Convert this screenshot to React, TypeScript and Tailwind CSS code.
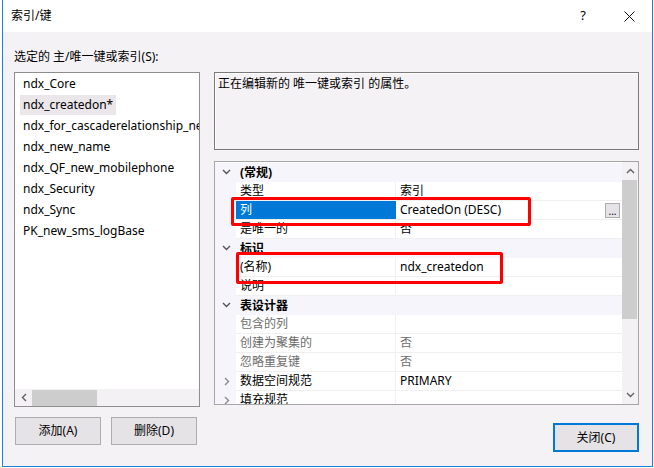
import React from "react";

const indexes = [
  "ndx_Core",
  "ndx_createdon*",
  "ndx_for_cascaderelationship_new_name",
  "ndx_new_name",
  "ndx_QF_new_mobilephone",
  "ndx_Security",
  "ndx_Sync",
  "PK_new_sms_logBase",
];

type Row = {
  name: string;
  value?: string;
  category?: boolean;
  expand?: "open" | "closed";
  disabled?: boolean;
  selected?: boolean;
};

const rows: Row[] = [
  { name: "(常规)", category: true, expand: "open" },
  { name: "类型", value: "索引" },
  { name: "列", value: "CreatedOn (DESC)", selected: true },
  { name: "是唯一的", value: "否" },
  { name: "标识", category: true, expand: "open" },
  { name: "(名称)", value: "ndx_createdon" },
  { name: "说明", value: "" },
  { name: "表设计器", category: true, expand: "open" },
  { name: "包含的列", value: "", disabled: true },
  { name: "创建为聚集的", value: "否", disabled: true },
  { name: "忽略重复键", value: "否", disabled: true },
  { name: "数据空间规范", value: "PRIMARY", expand: "closed" },
  { name: "填充规范", value: "", expand: "closed" },
];

function Chevron({ dir, color = "#555" }: { dir: "down" | "right" | "up" | "left"; color?: string }) {
  const d = {
    down: "M1 2 L4.5 5.5 L8 2",
    up: "M1 6 L4.5 2.5 L8 6",
    right: "M3 1 L6.5 4.5 L3 8",
    left: "M6 1 L2.5 4.5 L6 8",
  }[dir];
  return (
    <svg width="9" height="9" viewBox="0 0 9 9">
      <path d={d} fill="none" stroke={color} strokeWidth="1.4" />
    </svg>
  );
}

function PropRow({ row }: { row: Row }) {
  return (
    <div className="flex h-[19px] shrink-0">
      <div className="w-[21px] shrink-0 bg-[#f5f5fb] flex items-center justify-center pl-[2px]">
        {row.expand === "open" && <Chevron dir="down" />}
        {row.expand === "closed" && <Chevron dir="right" color="#8a8a8a" />}
      </div>
      {row.category ? (
        <div className="flex-1 bg-[#f5f5fb] pl-[4px] font-bold leading-[19px]">{row.name}</div>
      ) : (
        <>
          <div
            className={
              row.selected
                ? "w-[160px] shrink-0 bg-[#0078d7] text-white pl-[4px] leading-[18px] border-b border-[#f0f0f0]"
                : row.disabled
                ? "w-[160px] shrink-0 bg-white text-[#6d6d6d] pl-[4px] leading-[18px] border-b border-r border-[#f0f0f0]"
                : "w-[160px] shrink-0 bg-white pl-[4px] leading-[18px] border-b border-r border-[#f0f0f0]"
            }
          >
            {row.name}
          </div>
          <div
            className={
              row.disabled
                ? "flex-1 bg-white text-[#6d6d6d] pl-[4px] leading-[18px] border-b border-[#f0f0f0]"
                : "flex-1 bg-white pl-[4px] leading-[18px] border-b border-[#f0f0f0] flex items-center justify-between"
            }
          >
            <span>{row.value}</span>
            {row.selected && (
              <span className="mr-[2px] w-[15px] h-[15px] border border-[#adadad] bg-[#e5e3e7] flex items-end justify-center text-[10px] leading-[12px]">
                ...
              </span>
            )}
          </div>
        </>
      )}
    </div>
  );
}

export default function App() {
  return (
    <div className="relative w-[654px] h-[468px] bg-white pl-[2px] text-[12px] text-black font-['Noto_Sans','Noto_Sans_CJK_SC',sans-serif]">
      <div className="w-[651px] h-[467px] border-x border-b border-[#1883d7] bg-[#f5f2f6] flex flex-col">
        {/* title bar */}
        <div className="h-[32px] shrink-0 bg-white flex items-center pl-[8px]">
          <span className="flex-1 text-[12px]">索引/键</span>
          <span className="w-[46px] text-center text-[13px]">?</span>
          <span className="w-[46px] flex items-center justify-center">
            <svg width="11" height="11" viewBox="0 0 11 11">
              <path d="M0.5 0.5 L10.5 10.5 M10.5 0.5 L0.5 10.5" stroke="#111" strokeWidth="1" />
            </svg>
          </span>
        </div>

        <div className="pl-[11px] mt-[17px] leading-[16px]">选定的 主/唯一键或索引(S):</div>

        <div className="flex mt-[7px] pl-[11px] h-[335px]">
          {/* index list */}
          <div className="w-[186px] h-[335px] border border-[#8e8e8e] bg-white flex flex-col overflow-hidden">
            <div className="flex-1 pt-0 overflow-hidden">
              {indexes.map((n, i) => (
                <div key={n} className="h-[21px] pl-[5px] flex items-center whitespace-nowrap">
                  <span className={i === 1 ? "bg-[#eae6ea] px-[3px] leading-[20px]" : "px-[3px] leading-[20px]"}>{n}</span>
                </div>
              ))}
            </div>
            <div className="h-[17px] shrink-0 bg-[#f3f1f4] flex items-center">
              <span className="w-[17px] flex justify-center pl-[2px]">
                <Chevron dir="left" color="#606060" />
              </span>
              <div className="w-[65px] h-[16px] bg-[#cdcdcd]" />
              <div className="flex-1" />
            </div>
          </div>

          {/* right side */}
          <div className="ml-[14px] w-[425px] flex flex-col">
            <div className="h-[78px] border border-[#7a7a7a] bg-[#f5f2f6] shadow-[inset_1px_1px_0_#ffffff] pl-[3px] pt-[3px] leading-[16px]">
              正在编辑新的 唯一键或索引 的属性。
            </div>
            <div className="mt-[11px] h-[244px] border border-[#a6a6a6] bg-white flex overflow-hidden">
              <div className="flex-1 flex flex-col pt-[1px] overflow-hidden">
                {rows.map((r) => (
                  <PropRow key={r.name} row={r} />
                ))}
              </div>
              <div className="w-[16px] shrink-0 bg-[#f3f1f4] flex flex-col items-center">
                <div className="h-[18px] flex items-center">
                  <Chevron dir="up" color="#606060" />
                </div>
                <div className="w-[15px] h-[139px] bg-[#cdcdcd] mr-[1px]" />
                <div className="flex-1" />
                <div className="h-[18px] flex items-center">
                  <Chevron dir="down" color="#606060" />
                </div>
              </div>
            </div>
          </div>
        </div>

        {/* buttons */}
        <div className="flex items-start mt-[10px] pl-[12px] pr-[13px]">
          <button className="w-[86px] h-[28px] border border-[#adadad] bg-[#e6e3e7]">添加(A)</button>
          <button className="ml-[10px] w-[86px] h-[28px] border border-[#adadad] bg-[#e6e3e7]">删除(D)</button>
          <div className="flex-1" />
          <button className="mt-[6px] w-[86px] h-[29px] border-2 border-[#0078d7] bg-[#e6e3e7]">关闭(C)</button>
        </div>
      </div>

      {/* red annotation boxes */}
      <div className="absolute left-[231px] top-[197px] w-[300px] h-[29px] border-[3px] border-[#ff0000] rounded-[2px]" />
      <div className="absolute left-[236px] top-[252px] w-[267px] h-[32px] border-[3px] border-[#ff0000] rounded-[2px]" />
    </div>
  );
}
